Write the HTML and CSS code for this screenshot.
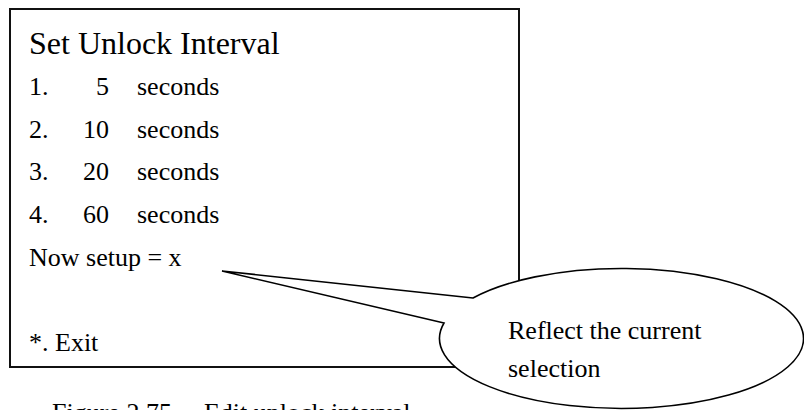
FILE: index.html
```html
<!DOCTYPE html>
<html lang="en">
  <head>
    <meta charset="UTF-8" />
    <meta name="viewport" content="width=device-width, initial-scale=1.0" />
    <title>Set Unlock Interval</title>
    <link rel="stylesheet" href="styles.css">
  </head>
  <body>
    <div class="page">
      <div class="panel">
        <h1>Set Unlock Interval</h1>
        <div class="row"><span class="idx">1.</span><span class="val">5</span><span class="unit">seconds</span></div>
        <div class="row"><span class="idx">2.</span><span class="val">10</span><span class="unit">seconds</span></div>
        <div class="row"><span class="idx">3.</span><span class="val">20</span><span class="unit">seconds</span></div>
        <div class="row"><span class="idx">4.</span><span class="val">60</span><span class="unit">seconds</span></div>
        <div class="row">Now setup = x</div>
        <div class="row blank"></div>
        <div class="row">*. Exit</div>
      </div>

      <p class="caption"><span class="fig">Figure 2.75</span><span>Edit unlock interval</span></p>

      <!-- speech bubble pointing at the current setting -->
      <svg class="bubble" viewBox="0 0 804 410" width="804" height="410">
        <path d="M 473 298 L 222 271 L 444 323 A 182 70 0 1 0 473 298 Z" />
      </svg>
      <div class="bubble-text">
        <div>Reflect the current</div>
        <div>selection</div>
      </div>
    </div>
  </body>
</html>
```

FILE: styles.css
```css
body {
  margin: 0;
  background-color: #fff;
  color: #000;
  font-family: "Liberation Serif", "Times New Roman", serif;
}

.page {
  position: relative;
  width: 804px;
  height: 410px;
  overflow: hidden;
}

.panel {
  box-sizing: border-box;
  width: 511px;
  height: 360px;
  margin: 8px 0 0 9px;
  padding: 10px 0 0 18px;
  border: 2px solid #111;
}

h1 {
  margin: 0;
  font-size: 32px;
  font-weight: normal;
  line-height: 46px;
}

.row {
  display: flex;
  height: 42.7px;
  font-size: 26px;
  line-height: 42.7px;
}

.idx {
  width: 50px;
}

.val {
  width: 30px;
  text-align: right;
}

.unit {
  margin-left: 28px;
}

.caption {
  margin: 24px 0 0 52px;
  font-size: 26px;
  line-height: 42.7px;
}

.fig {
  margin-right: 32px;
}

.bubble {
  position: absolute;
  left: 0;
  top: 0;
  pointer-events: none;
}

.bubble path {
  fill: #fff;
  stroke: #000;
  stroke-width: 1.6;
  stroke-linejoin: miter;
}

.bubble-text {
  position: absolute;
  left: 508px;
  top: 312px;
  font-size: 26px;
  line-height: 38px;
}
```
